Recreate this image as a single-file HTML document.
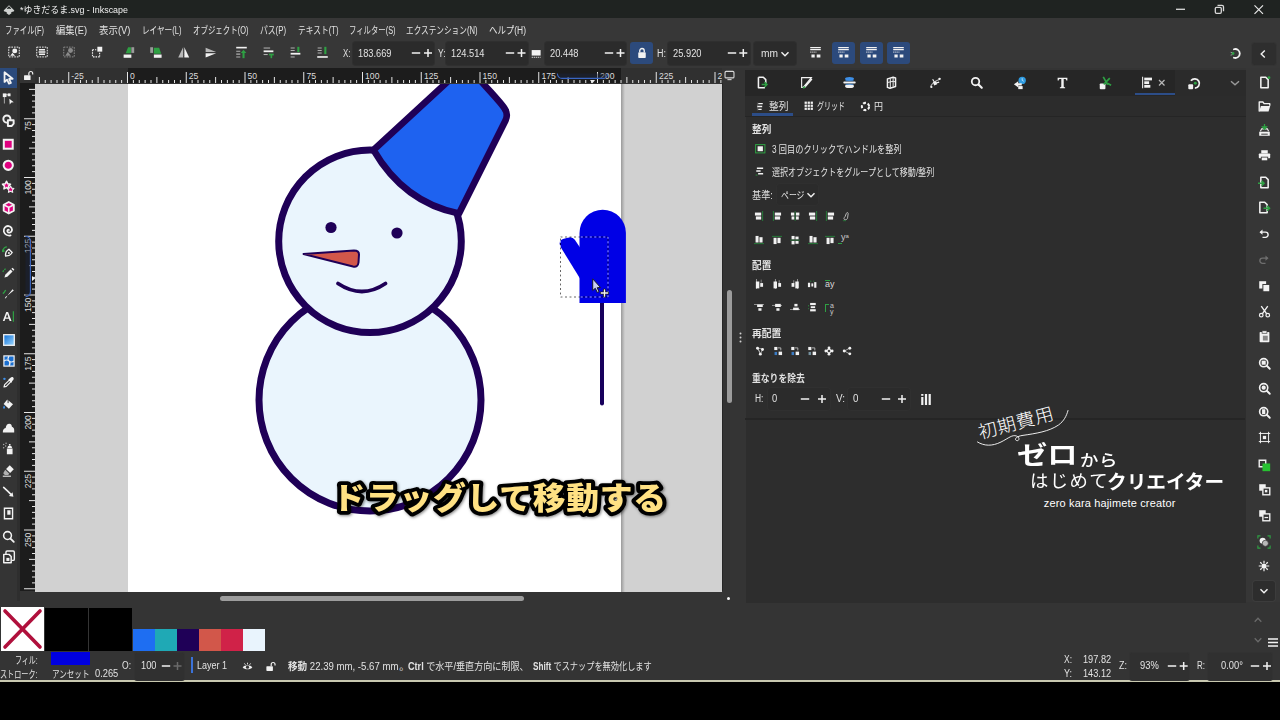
<!DOCTYPE html>
<html lang="ja">
<head>
<meta charset="utf-8">
<title>*ゆきだるま.svg - Inkscape</title>
<style>
html,body{margin:0;padding:0;}
body{width:1280px;height:720px;position:relative;overflow:hidden;background:#000;
 font-family:"Liberation Sans","Noto Sans CJK JP",sans-serif;color:#e2e2e2;font-size:10px;}
.abs{position:absolute;}
.t{position:absolute;white-space:nowrap;line-height:1;transform-origin:0 50%;}
svg{position:absolute;overflow:visible;}
#titlebar{left:0;top:0;width:1280px;height:18px;background:#1f2321;}
#topchrome{left:0;top:18px;width:1280px;height:50px;background:#373737;}
#chrome{left:0;top:18px;width:1280px;height:663px;background:#343434;}
#bottomline{left:0;top:680px;width:1280px;height:2px;background:#c9c9b0;}
#black{left:0;top:682px;width:1280px;height:38px;background:#000;}
#canvas{left:35px;top:83.500px;width:687px;height:508px;background:#d1d1d1;overflow:hidden;}
#page{left:93px;top:0;width:493px;height:508px;background:#fff;}
#pageshadow{left:586px;top:0;width:4px;height:508px;background:linear-gradient(90deg,#9a9a9a,#d1d1d1);}
#hruler{left:35px;top:68px;width:687px;height:15px;background:#303030;overflow:hidden;}
#hrulerpage{left:93px;top:0;width:493px;height:15px;background:#1c1c1c;}
#vruler{left:20px;top:83px;width:15px;height:508px;background:#1c1c1c;overflow:hidden;}
#dock{left:745.500px;top:70px;width:500.500px;height:532.800px;background:#2d2d2d;}
#docktabs{left:745px;top:70px;width:501px;height:26px;background:#262626;}
#subtabs{left:745px;top:96px;width:501px;height:20px;background:#2c2c2c;border-bottom:1px solid #252525;}
.box{position:absolute;background:#2b2b2b;border-radius:3px;box-shadow:0 0 0 1px #2f2f2f;}
.capt{font-family:"Noto Sans CJK JP",sans-serif;font-weight:900;font-size:32px;letter-spacing:0.2px;}
.lg{color:#fff;font-family:"Noto Sans CJK JP","Liberation Sans",sans-serif;}
#lg5{font-family:"Liberation Sans",sans-serif;}
.bbtn{position:absolute;background:#2c4a7c;border-radius:3px;}
</style>
</head>
<body>
<div id="titlebar" class="abs"></div>
<div id="chrome" class="abs"></div>
<div id="topchrome" class="abs"></div>
<div id="hruler" class="abs"><div id="hrulerpage" class="abs"></div></div>
<div id="vruler" class="abs"></div>
<div id="dock" class="abs"></div>
<div id="docktabs" class="abs"></div>
<div id="subtabs" class="abs"></div>
<div id="bottomline" class="abs"></div>
<div id="black" class="abs"></div>

<div id="canvas" class="abs">
<div id="page" class="abs"></div>
<div id="pageshadow" class="abs"></div>
<svg style="left:0;top:0;overflow:hidden" width="687" height="508" viewBox="35 83.500 687 508">
 <!-- body -->
 <circle cx="370" cy="399.5" r="111" fill="#eaf5fd" stroke="#1f0057" stroke-width="7"/>
 <!-- head -->
 <circle cx="370" cy="240.8" r="91.3" fill="#eaf5fd" stroke="#1f0057" stroke-width="7"/>
 <!-- bucket hat -->
 <path d="M373.5 149.500 L468.400 62 L477 76 C488 89 499 100 504.300 107.500 Q508.600 113.500 505.500 120 L459 213 Q404 202 373.500 149.500 Z" fill="#1e62f0" stroke="#1f0057" stroke-width="6.600" stroke-linejoin="round"/>
 <!-- eyes -->
 <circle cx="331" cy="227" r="5.6" fill="#1f0057"/>
 <circle cx="397" cy="232.5" r="5.6" fill="#1f0057"/>
 <!-- nose -->
 <path d="M303.5 253.5 L354 250 Q359 250 359 254 L358.5 262 Q358 267 353 266 Z" fill="#d2574a" stroke="#1f0057" stroke-width="2" stroke-linejoin="round"/>
 <!-- mouth -->
 <path d="M338 283 Q 362 299 385.5 283" fill="none" stroke="#1f0057" stroke-width="3.800" stroke-linecap="round"/>
 <!-- stick -->
 <path d="M602 300 L602 403" stroke="#17005c" stroke-width="4" stroke-linecap="round" fill="none"/>
 <!-- mitten -->
 <path d="M579.5 302.5 L579.5 232.5 A23.2 23.2 0 0 1 625.9 232.5 L625.9 302.5 Z" fill="#0000e6"/>
 <path d="M560.300 246 L580 278 L580 247 L574.800 239.300 Q572.500 236 568.500 237 L563 238.500 Q558.300 240 560.300 246 Z" fill="#0000e6"/>
 <!-- dashed selection -->
 <rect x="560.5" y="236.5" width="47.500" height="60" fill="none" stroke="#000" stroke-opacity=".6" stroke-width="1" stroke-dasharray="2 2.500"/>
 <rect x="560.5" y="236.5" width="47.500" height="60" fill="none" stroke="#fff" stroke-opacity=".6" stroke-width="1" stroke-dasharray="2 2.500" stroke-dashoffset="2.200"/>
 <!-- cursor -->
 <path d="M592.700 278.300 L592.700 290 L595.300 287.800 L597.300 292 L599 291.200 L597.200 287.200 L600.500 287 Z" fill="#c9cdf3" stroke="#1a1a2a" stroke-width="1"/>
 <g stroke="#222" stroke-width="2.800" fill="none" stroke-linecap="round"><path d="M601.300 292.500 h6.400 M604.500 289.300 v6.400"/></g>
 <g stroke="#f4f4f4" stroke-width="1.300" fill="none" stroke-linecap="round"><path d="M601.300 292.500 h6.400 M604.500 289.300 v6.400"/></g>
</svg>
</div>

<svg style="left:35px;top:68px;overflow:hidden" width="687" height="15" viewBox="35 68 687 15">
<path d="M39.38 83v-6 M45.25 83v-3 M51.12 83v-3 M57.00 83v-3 M62.88 83v-3 M68.75 83v-11 M74.62 83v-3 M80.50 83v-3 M86.38 83v-3 M92.25 83v-3 M98.12 83v-6 M104.00 83v-3 M109.88 83v-3 M115.75 83v-3 M121.62 83v-3 M127.50 83v-11 M133.38 83v-3 M139.25 83v-3 M145.12 83v-3 M151.00 83v-3 M156.88 83v-6 M162.75 83v-3 M168.62 83v-3 M174.50 83v-3 M180.38 83v-3 M186.25 83v-11 M192.12 83v-3 M198.00 83v-3 M203.88 83v-3 M209.75 83v-3 M215.62 83v-6 M221.50 83v-3 M227.38 83v-3 M233.25 83v-3 M239.12 83v-3 M245.00 83v-11 M250.88 83v-3 M256.75 83v-3 M262.62 83v-3 M268.50 83v-3 M274.38 83v-6 M280.25 83v-3 M286.12 83v-3 M292.00 83v-3 M297.88 83v-3 M303.75 83v-11 M309.62 83v-3 M315.50 83v-3 M321.38 83v-3 M327.25 83v-3 M333.12 83v-6 M339.00 83v-3 M344.88 83v-3 M350.75 83v-3 M356.62 83v-3 M362.50 83v-11 M368.38 83v-3 M374.25 83v-3 M380.12 83v-3 M386.00 83v-3 M391.88 83v-6 M397.75 83v-3 M403.62 83v-3 M409.50 83v-3 M415.38 83v-3 M421.25 83v-11 M427.12 83v-3 M433.00 83v-3 M438.88 83v-3 M444.75 83v-3 M450.62 83v-6 M456.50 83v-3 M462.38 83v-3 M468.25 83v-3 M474.12 83v-3 M480.00 83v-11 M485.88 83v-3 M491.75 83v-3 M497.62 83v-3 M503.50 83v-3 M509.38 83v-6 M515.25 83v-3 M521.12 83v-3 M527.00 83v-3 M532.88 83v-3 M538.75 83v-11 M544.62 83v-3 M550.50 83v-3 M556.38 83v-3 M562.25 83v-3 M568.12 83v-6 M574.00 83v-3 M579.88 83v-3 M585.75 83v-3 M591.62 83v-3 M597.50 83v-11 M603.38 83v-3 M609.25 83v-3 M615.12 83v-3 M621.00 83v-3 M626.88 83v-6 M632.75 83v-3 M638.62 83v-3 M644.50 83v-3 M650.38 83v-3 M656.25 83v-11 M662.12 83v-3 M668.00 83v-3 M673.88 83v-3 M679.75 83v-3 M685.62 83v-6 M691.50 83v-3 M697.38 83v-3 M703.25 83v-3 M709.12 83v-3 M715.00 83v-11 M720.88 83v-3" stroke="#e6e6e6" stroke-width="1" fill="none"/>
<text x="71.3" y="78.800" font-size="8.600" fill="#dcdcdc" font-family="Liberation Sans, sans-serif">-25</text>
<text x="130.1" y="78.800" font-size="8.600" fill="#dcdcdc" font-family="Liberation Sans, sans-serif">0</text>
<text x="188.8" y="78.800" font-size="8.600" fill="#dcdcdc" font-family="Liberation Sans, sans-serif">25</text>
<text x="247.6" y="78.800" font-size="8.600" fill="#dcdcdc" font-family="Liberation Sans, sans-serif">50</text>
<text x="306.4" y="78.800" font-size="8.600" fill="#dcdcdc" font-family="Liberation Sans, sans-serif">75</text>
<text x="365.1" y="78.800" font-size="8.600" fill="#dcdcdc" font-family="Liberation Sans, sans-serif">100</text>
<text x="423.9" y="78.800" font-size="8.600" fill="#dcdcdc" font-family="Liberation Sans, sans-serif">125</text>
<text x="482.6" y="78.800" font-size="8.600" fill="#dcdcdc" font-family="Liberation Sans, sans-serif">150</text>
<text x="541.4" y="78.800" font-size="8.600" fill="#dcdcdc" font-family="Liberation Sans, sans-serif">175</text>
<text x="600.1" y="78.800" font-size="8.600" fill="#dcdcdc" font-family="Liberation Sans, sans-serif">200</text>
<text x="658.9" y="78.800" font-size="8.600" fill="#dcdcdc" font-family="Liberation Sans, sans-serif">225</text>
<text x="717.6" y="78.800" font-size="8.600" fill="#dcdcdc" font-family="Liberation Sans, sans-serif">250</text>
</svg>
<svg style="left:20px;top:83px;overflow:hidden" width="15" height="508" viewBox="20 83 15 508">
<path d="M35 89.38h-6 M35 95.25h-3 M35 101.12h-3 M35 107.00h-3 M35 112.88h-3 M35 118.75h-11 M35 124.62h-3 M35 130.50h-3 M35 136.38h-3 M35 142.25h-3 M35 148.12h-6 M35 154.00h-3 M35 159.88h-3 M35 165.75h-3 M35 171.62h-3 M35 177.50h-11 M35 183.38h-3 M35 189.25h-3 M35 195.12h-3 M35 201.00h-3 M35 206.88h-6 M35 212.75h-3 M35 218.62h-3 M35 224.50h-3 M35 230.38h-3 M35 236.25h-11 M35 242.12h-3 M35 248.00h-3 M35 253.88h-3 M35 259.75h-3 M35 265.62h-6 M35 271.50h-3 M35 277.38h-3 M35 283.25h-3 M35 289.12h-3 M35 295.00h-11 M35 300.88h-3 M35 306.75h-3 M35 312.62h-3 M35 318.50h-3 M35 324.38h-6 M35 330.25h-3 M35 336.12h-3 M35 342.00h-3 M35 347.88h-3 M35 353.75h-11 M35 359.62h-3 M35 365.50h-3 M35 371.38h-3 M35 377.25h-3 M35 383.12h-6 M35 389.00h-3 M35 394.88h-3 M35 400.75h-3 M35 406.62h-3 M35 412.50h-11 M35 418.38h-3 M35 424.25h-3 M35 430.12h-3 M35 436.00h-3 M35 441.88h-6 M35 447.75h-3 M35 453.62h-3 M35 459.50h-3 M35 465.38h-3 M35 471.25h-11 M35 477.12h-3 M35 483.00h-3 M35 488.88h-3 M35 494.75h-3 M35 500.62h-6 M35 506.50h-3 M35 512.38h-3 M35 518.25h-3 M35 524.12h-3 M35 530.00h-11 M35 535.88h-3 M35 541.75h-3 M35 547.62h-3 M35 553.50h-3 M35 559.38h-6 M35 565.25h-3 M35 571.12h-3 M35 577.00h-3 M35 582.88h-3 M35 588.75h-11" stroke="#e6e6e6" stroke-width="1" fill="none"/>
<text transform="translate(30.800 62.6) rotate(-90)" text-anchor="end" font-size="8.600" fill="#dcdcdc" font-family="Liberation Sans, sans-serif">50</text>
<text transform="translate(30.800 121.3) rotate(-90)" text-anchor="end" font-size="8.600" fill="#dcdcdc" font-family="Liberation Sans, sans-serif">75</text>
<text transform="translate(30.800 180.1) rotate(-90)" text-anchor="end" font-size="8.600" fill="#dcdcdc" font-family="Liberation Sans, sans-serif">100</text>
<text transform="translate(30.800 238.8) rotate(-90)" text-anchor="end" font-size="8.600" fill="#dcdcdc" font-family="Liberation Sans, sans-serif">125</text>
<text transform="translate(30.800 297.6) rotate(-90)" text-anchor="end" font-size="8.600" fill="#dcdcdc" font-family="Liberation Sans, sans-serif">150</text>
<text transform="translate(30.800 356.4) rotate(-90)" text-anchor="end" font-size="8.600" fill="#dcdcdc" font-family="Liberation Sans, sans-serif">175</text>
<text transform="translate(30.800 415.1) rotate(-90)" text-anchor="end" font-size="8.600" fill="#dcdcdc" font-family="Liberation Sans, sans-serif">200</text>
<text transform="translate(30.800 473.9) rotate(-90)" text-anchor="end" font-size="8.600" fill="#dcdcdc" font-family="Liberation Sans, sans-serif">225</text>
<text transform="translate(30.800 532.6) rotate(-90)" text-anchor="end" font-size="8.600" fill="#dcdcdc" font-family="Liberation Sans, sans-serif">250</text>
<text transform="translate(30.800 591.4) rotate(-90)" text-anchor="end" font-size="8.600" fill="#dcdcdc" font-family="Liberation Sans, sans-serif">275</text>
</svg>
<div class="box" style="left:353px;top:42px;width:81px;height:23px;"></div>
<div class="box" style="left:446px;top:42px;width:81.5px;height:23px;"></div>
<div class="box" style="left:545px;top:42px;width:80.5px;height:23px;"></div>
<div class="box" style="left:668px;top:42px;width:81.5px;height:23px;"></div>
<div class="box" style="left:754px;top:42px;width:42px;height:23px;"></div>
<div class="bbtn" style="left:630px;top:42px;width:23px;height:22px"></div>
<div class="bbtn" style="left:832px;top:42px;width:23px;height:22px"></div>
<div class="bbtn" style="left:860px;top:42px;width:22.5px;height:22px"></div>
<div class="bbtn" style="left:887px;top:42px;width:22.5px;height:22px"></div>
<div class="abs" style="left:0;top:68px;width:17px;height:20px;background:#2b4a7b"></div>
<div class="abs" style="left:17px;top:68px;width:3px;height:533px;background:#2e2e2e"></div>
<div class="box" style="left:777px;top:184px;width:41px;height:21px;"></div>
<div class="box" style="left:767.5px;top:388px;width:62.5px;height:22px;background:#2b2b2b;box-shadow:0 0 0 1px #303030;"></div>
<div class="box" style="left:848px;top:388px;width:62px;height:22px;background:#2b2b2b;box-shadow:0 0 0 1px #303030;"></div>
<div class="abs" style="left:751.5px;top:113px;width:41.5px;height:2.5px;background:#2c4d88"></div>
<div class="abs" style="left:1135px;top:92.5px;width:40px;height:2.5px;background:#2c4d88"></div>
<div class="abs" style="left:1246px;top:68px;width:34px;height:534px;background:#363636"></div>
<div class="abs" style="left:1175px;top:70px;width:71px;height:26px;background:#2b2b2b"></div>
<div class="abs" style="left:745px;top:418px;width:500px;height:1.500px;background:#252525"></div>
<div class="box" style="left:1253px;top:581px;width:21.5px;height:19.5px;background:#2d2d2d;box-shadow:0 0 0 1px #3c3c3c;"></div>
<div class="box" style="left:1252px;top:42.5px;width:24px;height:22.0px;background:#2e2e2e;box-shadow:0 0 0 1px #343434;"></div>
<div class="box" style="left:135px;top:653px;width:49px;height:27px;background:#303030;border-radius:2px;box-shadow:0 0 0 1px #323232;"></div>
<div class="box" style="left:1130px;top:653px;width:59px;height:27px;background:#303030;border-radius:2px;box-shadow:0 0 0 1px #323232;"></div>
<div class="box" style="left:1207.5px;top:653px;width:64.5px;height:27px;background:#303030;border-radius:2px;box-shadow:0 0 0 1px #323232;"></div>
<div class="abs" style="left:722px;top:83px;width:1px;height:508px;background:#262626"></div>
<div class="abs" style="left:220px;top:596px;width:303.5px;height:5px;border-radius:3px;background:#9c9c9c"></div>
<div class="abs" style="left:727px;top:290px;width:4.5px;height:113px;border-radius:3px;background:#9c9c9c"></div>
<div class="abs" style="left:727.300px;top:597px;width:3px;height:3px;border-radius:2px;background:#f4f4f4"></div>
<div class="abs" style="left:1px;top:607px;width:43px;height:44px;background:#fff"></div>
<svg style="left:1px;top:607px" width="43" height="44"><path d="M4 4 L39 40 M39 4 L4 40" stroke="#b0103c" stroke-width="3.6" stroke-linecap="round"/></svg>
<div class="abs" style="left:45px;top:607.5px;width:43.2px;height:43.5px;background:#000"></div>
<div class="abs" style="left:89.2px;top:607.5px;width:42.8px;height:43.5px;background:#000"></div>
<div class="abs" style="left:133px;top:629.4px;width:21.6px;height:21.4px;background:#1e6ef2"></div>
<div class="abs" style="left:155px;top:629.4px;width:21.6px;height:21.4px;background:#1fa9b5"></div>
<div class="abs" style="left:177px;top:629.4px;width:21.6px;height:21.4px;background:#1f0057"></div>
<div class="abs" style="left:199px;top:629.4px;width:21.6px;height:21.4px;background:#d2574a"></div>
<div class="abs" style="left:221px;top:629.4px;width:21.6px;height:21.4px;background:#d02248"></div>
<div class="abs" style="left:243px;top:629.4px;width:21.6px;height:21.4px;background:#e9f4fd"></div>
<div class="abs" style="left:50.6px;top:651.6px;width:39.4px;height:13.5px;background:#0000e0"></div>
<div class="abs" style="left:190.6px;top:657px;width:2.4px;height:16px;background:#3b72d9"></div>
<svg style="left:1.8px;top:71.2px;" width="13.5" height="13.5" viewBox="0 0 16 16"><path d="M3 1.5 L3 13 L6 10.3 L8.2 15 L10.6 14 L8.4 9.4 L12.6 9.2 Z" fill="#2b4a7b" stroke="#f2f2f2" stroke-width="2.100" stroke-linejoin="round"/></svg>
<svg style="left:2.0px;top:92.5px;" width="13" height="13" viewBox="0 0 16 16"><path d="M3 2v11M3 2h6" stroke="#9a9a9a" stroke-width="1.4" fill="none"/><rect x="1" y="0.5" width="4.5" height="4.5" fill="#f2f2f2"/><rect x="7" y="0.5" width="3.5" height="3.5" fill="#f2f2f2"/><path d="M9 7l5.5 4.5-3 .3-2 2.4z" fill="#f2f2f2"/></svg>
<svg style="left:1.8px;top:113.8px;" width="13.5" height="13.5" viewBox="0 0 16 16"><circle cx="5.800" cy="6" r="4.200" fill="none" stroke="#f2f2f2" stroke-width="2.300"/><path d="M7 7.500h6.800v4l-2.500 2.800h-4.300z" fill="#343434" stroke="#f2f2f2" stroke-width="2.300" stroke-linejoin="round"/></svg>
<svg style="left:2.2px;top:137.8px;" width="12.5" height="12.5" viewBox="0 0 16 16"><rect x="2.300" y="2.300" width="11.400" height="11.400" fill="#e0007f" stroke="#f2f2f2" stroke-width="2.600"/></svg>
<svg style="left:2.2px;top:158.8px;" width="12.5" height="12.5" viewBox="0 0 16 16"><circle cx="8" cy="8" r="5.900" fill="#e0007f" stroke="#f2f2f2" stroke-width="2.600"/></svg>
<svg style="left:2.0px;top:180.0px;" width="13" height="13" viewBox="0 0 16 16"><path d="M5.5 1.5l1.6 3.2 3.4.4-2.5 2.4.7 3.5-3.2-1.7-3.1 1.7.6-3.5L.6 5.1l3.4-.4z" fill="#e0007f" stroke="#f2f2f2" stroke-width="1.900" stroke-linejoin="round"/><path d="M10.5 7.5l1.4 2.5 2.8.4-2 2 .5 2.8-2.7-1.4-2.6 1.4.5-2.8-2-2 2.8-.4z" fill="#e0007f" stroke="#f2f2f2" stroke-width="1.3" stroke-linejoin="round"/></svg>
<svg style="left:1.8px;top:200.9px;" width="13.5" height="13.5" viewBox="0 0 16 16"><path d="M8 1.2l6 3.2v7.2l-6 3.2-6-3.2V4.4z" fill="#e0007f" stroke="#f2f2f2" stroke-width="2.200" stroke-linejoin="round"/><path d="M2 4.400l6 3.200 6-3.200M8 7.600v7" stroke="#f2f2f2" stroke-width="1.900" fill="none"/></svg>
<svg style="left:1.8px;top:222.9px;" width="13.5" height="13.5" viewBox="0 0 16 16"><path d="M8.300 8.200c-1.300-.700-2.500.700-1.800 2 .9 1.800 3.700 1.500 4.800-.400 1.500-2.600-.400-5.800-3.400-6.200-3.700-.500-6.500 3-5.700 6.500.9 3.500 4.500 5.300 8 4.500" fill="none" stroke="#f2f2f2" stroke-width="2.100" stroke-linecap="round"/></svg>
<svg style="left:2.0px;top:246.0px;" width="13" height="13" viewBox="0 0 16 16"><path d="M4.500 12.500c-.5-3 .5-6.500 4-8.500l4 4c-2 3.500-5 4.500-8 4.500z" fill="none" stroke="#f2f2f2" stroke-width="1.7" stroke-linejoin="round"/><circle cx="8.5" cy="8.500" r="1.2" fill="#f2f2f2"/><path d="M1 5.500c1-3 3-4.500 5-4.500" stroke="#2ea043" stroke-width="1.5" fill="none"/><rect x="0" y="4.5" width="3" height="3" fill="#2ea043"/></svg>
<svg style="left:2.0px;top:267.2px;" width="13" height="13" viewBox="0 0 16 16"><path d="M3 13l1-3.500 6.500-6.500 2.500 2.500-6.500 6.500z" fill="#f2f2f2"/><path d="M11.500 2l1.500-1.200 2.200 2.200-1.200 1.500z" fill="#f2f2f2"/><path d="M1 6c1-2 2.500-3.500 4.500-4.500" stroke="#2ea043" stroke-width="1.600" fill="none" stroke-dasharray="2 1.2"/></svg>
<svg style="left:2.0px;top:288.0px;" width="13" height="13" viewBox="0 0 16 16"><path d="M3.500 13c.5-2 1.500-3 3-3.500l6.500-8 1.500 1.500-8 6.500c-.5 1.500-1.500 3-3 3.500z" fill="#f2f2f2"/><path d="M1 7c1.500-1 2.500-2.500 3.500-4.500" stroke="#2ea043" stroke-width="1.700" fill="none"/></svg>
<svg style="left:2.0px;top:310.2px;" width="13" height="13" viewBox="0 0 16 16"><path d="M1 13.500L5.200 2.500h2.300l4.200 11h-2.300l-.9-2.600H4.100l-.9 2.600zm3.700-4.400h3.200L6.300 4.600z" fill="#f2f2f2"/><path d="M14 1.500v13" stroke="#2ea043" stroke-width="1.500"/></svg>
<svg style="left:2.5px;top:333.5px" width="12" height="12" viewBox="0 0 12 12"><defs><linearGradient id="gr1" x1="0" y1="0" x2="1" y2="1"><stop offset="0" stop-color="#0d6fd8"/><stop offset="1" stop-color="#9ed8ff"/></linearGradient></defs><rect x=".7" y=".7" width="10.600" height="10.600" fill="url(#gr1)" stroke="#f2f2f2" stroke-width="1.300"/></svg>
<svg style="left:2.5px;top:355.0px;" width="12" height="12" viewBox="0 0 16 16"><rect x="1.200" y="1.200" width="13.600" height="13.600" fill="#1a6fd0" stroke="#f2f2f2" stroke-width="1.600"/><path d="M1.500 8c2.500-2 4-2 6.500 0s4 2 6.500 0M8 1.500c-2 2.500-2 4 0 6.500s2 4 0 6.500" stroke="#f2f2f2" stroke-width="1.500" fill="none"/></svg>
<svg style="left:2.0px;top:376.0px;" width="13" height="13" viewBox="0 0 16 16"><path d="M2.500 13.500l.8-2.800 5.700-5.700 2 2-5.700 5.700z" fill="none" stroke="#f2f2f2" stroke-width="1.500" stroke-linejoin="round"/><path d="M9 3.500l1.500-1.500c1-1 2.500-1 3.300-.2s.8 2.300-.2 3.300l-1.500 1.500 .5 .5-1.200 1.200-3.600-3.600 1.200-1.200z" fill="#f2f2f2"/><circle cx="3" cy="3.500" r="1.500" fill="#3d8fe8"/></svg>
<svg style="left:2.0px;top:397.2px;" width="13" height="13" viewBox="0 0 16 16"><path d="M6.500 3l7 6-5 5.500-6.500-6z" fill="#f2f2f2"/><path d="M7.500 1.500v6" stroke="#343434" stroke-width="1.200"/><path d="M2.500 10.500c-1.200 1.800-1.500 2.800-.7 3.600.8.700 2 .2 2-1.100 0-.8-.6-1.600-1.300-2.500z" fill="#3d8fe8"/></svg>
<svg style="left:2.0px;top:420.5px;" width="13" height="13" viewBox="0 0 16 16"><path d="M1 14c0-3 1-5 3.500-5.500.5-3 2-5 4.500-5 2 0 3 1.500 3.200 3.500 1.800.5 2.800 2 2.800 4v3z" fill="#f2f2f2"/></svg>
<svg style="left:2.0px;top:442.2px;" width="13" height="13" viewBox="0 0 16 16"><path d="M6 8h7v7H6zM7.500 5h4l1 2.500h-6z" fill="#f2f2f2"/><path d="M8.500 2.500h2v2h-2z" fill="#f2f2f2"/><g fill="#aaa"><circle cx="2" cy="3" r=".9"/><circle cx="4.500" cy="5" r=".9"/><circle cx="2" cy="7" r=".9"/><circle cx="5" cy="1.500" r=".9"/></g></svg>
<svg style="left:2.0px;top:463.5px;" width="13" height="13" viewBox="0 0 16 16"><path d="M9.500 1.500l5 5-4.500 4.500-5-5z" fill="#f2f2f2"/><path d="M4 7l5 5-1.500 1.500h-4L1.500 11.500z" fill="#b0b0b0"/><path d="M1 15h10" stroke="#f2f2f2" stroke-width="1.300"/></svg>
<svg style="left:2.0px;top:484.5px;" width="13" height="13" viewBox="0 0 16 16"><path d="M2 3l5 4.500v0l4 4" stroke="#f2f2f2" stroke-width="2" fill="none" stroke-linecap="round"/><path d="M8.500 13.500l5.500 1-1-5.500z" fill="#f2f2f2"/></svg>
<svg style="left:2.0px;top:507.2px;" width="13" height="13" viewBox="0 0 16 16"><path d="M3 1.500h10v13H3z" fill="none" stroke="#f2f2f2" stroke-width="1.700"/><path d="M6.500 4h4v5.500h-4z" fill="#f2f2f2"/></svg>
<svg style="left:2.0px;top:529.5px;" width="13" height="13" viewBox="0 0 16 16"><circle cx="6.800" cy="6.800" r="4.800" fill="none" stroke="#f2f2f2" stroke-width="1.900"/><path d="M10.500 10.500l4 4" stroke="#f2f2f2" stroke-width="2.200" stroke-linecap="round"/></svg>
<svg style="left:1.5px;top:550.0px;" width="14" height="14" viewBox="0 0 16 16"><path d="M4.500 4.500V2.500c0-.8.500-1.300 1.300-1.300h7c.8 0 1.300.5 1.300 1.300v8c0 .8-.5 1.300-1.300 1.300h-1.500" fill="none" stroke="#f2f2f2" stroke-width="1.600"/><path d="M2 5h6l2.500 2.500V14.500H2z" fill="none" stroke="#f2f2f2" stroke-width="1.700" stroke-linejoin="round"/><path d="M5 9h3.500v3.500H5z" fill="#f2f2f2"/></svg>
<svg style="left:1174px;top:3px" width="100" height="14" viewBox="1174 3 100 14"><path d="M1176 9.300h9" stroke="#d0d0d0" stroke-width="1.400"/><rect x="1215.300" y="7.300" width="6" height="6" rx="1.200" fill="none" stroke="#d8d8d8" stroke-width="1.300"/><path d="M1217.500 5.300h4.500q1.500 0 1.500 1.500v4.500" fill="none" stroke="#d8d8d8" stroke-width="1.300"/><path d="M1254.500 5.300l8.500 8.500m0-8.500l-8.500 8.500" stroke="#e8e8e8" stroke-width="1.200"/></svg>
<svg style="left:2.5px;top:3.5px;" width="12" height="12" viewBox="0 0 16 16"><path d="M8 1.500L1.500 8c-.8.800-.5 1.700.5 2l2.500.700c1 .300.800 1-.100 1.300l3.600 2.500 3.600-2.500c-.900-.300-1.100-1-.100-1.300l2.500-.700c1-.300 1.300-1.200.500-2z" fill="#cfd2d0"/><path d="M8 3l3 3-1.500.8L8 6l-1.500.8L5 6z" fill="#1d2320"/></svg>
<svg style="left:8.3px;top:46.3px;" width="12" height="12" viewBox="0 0 16 16"><rect x="1" y="1.500" width="14" height="13" fill="none" stroke="#f2f2f2" stroke-width="1.300" stroke-dasharray="2.200 1.300"/><circle cx="9" cy="6.500" r="3.300" fill="#f2f2f2"/><path d="M3 13l3-4 3.500 4z" fill="#f2f2f2"/></svg>
<svg style="left:35.5px;top:46.3px;" width="12" height="12" viewBox="0 0 16 16"><rect x="1" y="1.500" width="14" height="13" fill="none" stroke="#f2f2f2" stroke-width="1.300" stroke-dasharray="2.200 1.300"/><path d="M4 5h8M3.500 8h9M4 11h8" stroke="#f2f2f2" stroke-width="2"/></svg>
<svg style="left:63.0px;top:46.3px;" width="12" height="12" viewBox="0 0 16 16"><rect x="1" y="1.500" width="14" height="13" fill="none" stroke="#8a8a8a" stroke-width="1.300" stroke-dasharray="2.200 1.300"/><circle cx="10" cy="6" r="3.300" fill="#8a8a8a"/><path d="M3 13l3.500-5.500 4 5.500z" fill="#8a8a8a"/></svg>
<svg style="left:91.0px;top:46.3px;" width="12" height="12" viewBox="0 0 16 16"><path d="M2 5v9.500h9.500" fill="none" stroke="#f2f2f2" stroke-width="1.500" stroke-dasharray="2 1.400"/><path d="M2 5h5M11.500 9v5" stroke="#f2f2f2" stroke-width="1.500" stroke-dasharray="2 1.400"/><rect x="8.500" y="1" width="6.500" height="6.500" fill="#f2f2f2"/></svg>
<svg style="left:121.5px;top:45.8px;" width="13" height="13" viewBox="0 0 16 16"><path d="M4.500 9l3-7.500h3.500v7.500z" fill="#2ea043"/><rect x="11.500" y="1.500" width="3.500" height="7" fill="#9a9a9a"/><rect x="2" y="10.500" width="9.500" height="4" fill="#f2f2f2"/></svg>
<svg style="left:149.2px;top:45.8px;" width="13" height="13" viewBox="0 0 16 16"><path d="M6 2h6.500l2.500 7.500h-9z" fill="#2ea043"/><rect x="1.500" y="1.500" width="3.500" height="7" fill="#9a9a9a"/><rect x="6" y="10.500" width="9.500" height="4" fill="#f2f2f2"/></svg>
<svg style="left:176.8px;top:45.8px;" width="13" height="13" viewBox="0 0 16 16"><path d="M7.500 1.500L1.500 14h6z" fill="#b8b8b8"/><path d="M9 1.500L15 14H9z" fill="#f2f2f2"/><path d="M8.200 1v14" stroke="#555" stroke-width=".8" stroke-dasharray="1.500 1"/></svg>
<svg style="left:203.8px;top:45.8px;" width="13" height="13" viewBox="0 0 16 16"><path d="M2 2l13 5.500H2z" fill="#b8b8b8"/><path d="M2 14l13-5H2z" fill="#f2f2f2"/></svg>
<svg style="left:234.5px;top:45.8px;" width="13" height="13" viewBox="0 0 16 16"><path d="M1.500 2h13" stroke="#f2f2f2" stroke-width="2"/><path d="M1.500 6.500h5M1.500 10h5M1.500 13.500h5" stroke="#b0b0b0" stroke-width="1.300"/><path d="M10.500 15V8" stroke="#2ea043" stroke-width="2.600"/><path d="M7 8.500l3.500-4 3.500 4z" fill="#2ea043"/></svg>
<svg style="left:261.5px;top:45.8px;" width="13" height="13" viewBox="0 0 16 16"><path d="M2 2.500h8" stroke="#b0b0b0" stroke-width="1.300"/><path d="M2 6.500h12" stroke="#f2f2f2" stroke-width="2.200"/><path d="M2 10.500h5" stroke="#b0b0b0" stroke-width="1.300"/><path d="M8.500 10.500h6" stroke="#2ea043" stroke-width="2.200"/><path d="M11.500 15v-4" stroke="#2ea043" stroke-width="2"/></svg>
<svg style="left:289.0px;top:45.8px;" width="13" height="13" viewBox="0 0 16 16"><path d="M2 2.500h5M2 5.500h5" stroke="#b0b0b0" stroke-width="1.300"/><path d="M11.500 1v6.500" stroke="#2ea043" stroke-width="2.600"/><path d="M2 9.500h12" stroke="#f2f2f2" stroke-width="2.200"/><path d="M2 13.500h5" stroke="#b0b0b0" stroke-width="1.300"/></svg>
<svg style="left:316.2px;top:45.8px;" width="13" height="13" viewBox="0 0 16 16"><path d="M2 2.500h5M2 5.500h5M2 8.500h5" stroke="#b0b0b0" stroke-width="1.300"/><path d="M11.500 1v9" stroke="#2ea043" stroke-width="2.600"/><path d="M1.500 13.500h13" stroke="#f2f2f2" stroke-width="2"/></svg>
<svg style="left:530.5px;top:47.5px;" width="11" height="11" viewBox="0 0 16 16"><rect x="1" y="3" width="13" height="8" fill="#f2f2f2"/><path d="M1 13.500h13" stroke="#f2f2f2" stroke-width="1.200" stroke-dasharray="2 1"/></svg>
<svg style="left:410.2px;top:46.7px" width="24.0" height="12" viewBox="410.2 46.7 24.0 12"><path d="M412.0 52.7h8.400" stroke="#f2f2f2" stroke-width="1.500"/><path d="M424.2 52.7h8M428.2 48.7v8" stroke="#f2f2f2" stroke-width="1.500"/></svg>
<svg style="left:504px;top:46.7px" width="23.5" height="12" viewBox="504 46.7 23.5 12"><path d="M505.8 52.7h8.400" stroke="#f2f2f2" stroke-width="1.500"/><path d="M517.5 52.7h8M521.5 48.7v8" stroke="#f2f2f2" stroke-width="1.500"/></svg>
<svg style="left:602.8px;top:46.7px" width="23.5" height="12" viewBox="602.8 46.7 23.5 12"><path d="M604.5999999999999 52.7h8.400" stroke="#f2f2f2" stroke-width="1.500"/><path d="M616.3 52.7h8M620.3 48.7v8" stroke="#f2f2f2" stroke-width="1.500"/></svg>
<svg style="left:726px;top:46.7px" width="23.299999999999955" height="12" viewBox="726 46.7 23.299999999999955 12"><path d="M727.8 52.7h8.400" stroke="#f2f2f2" stroke-width="1.500"/><path d="M739.3 52.7h8M743.3 48.7v8" stroke="#f2f2f2" stroke-width="1.500"/></svg>
<svg style="left:799px;top:393px" width="29" height="12" viewBox="799 393 29 12"><path d="M800.8 399h8.400" stroke="#f2f2f2" stroke-width="1.500"/><path d="M818 399h8M822 395v8" stroke="#f2f2f2" stroke-width="1.500"/></svg>
<svg style="left:880px;top:393px" width="28" height="12" viewBox="880 393 28 12"><path d="M881.8 399h8.400" stroke="#f2f2f2" stroke-width="1.500"/><path d="M898 399h8M902 395v8" stroke="#f2f2f2" stroke-width="1.500"/></svg>
<svg style="left:160px;top:660px" width="23.5" height="12" viewBox="160 660 23.5 12"><path d="M161.8 666h8.400" stroke="#f2f2f2" stroke-width="1.500"/><path d="M173.5 666h8M177.5 662v8" stroke="#6a6a6a" stroke-width="1.500"/></svg>
<svg style="left:1166px;top:660px" width="23.700000000000045" height="12" viewBox="1166 660 23.700000000000045 12"><path d="M1167.8 666h8.400" stroke="#f2f2f2" stroke-width="1.500"/><path d="M1179.7 666h8M1183.7 662v8" stroke="#f2f2f2" stroke-width="1.500"/></svg>
<svg style="left:1249px;top:660px" width="24" height="12" viewBox="1249 660 24 12"><path d="M1250.8 666h8.400" stroke="#f2f2f2" stroke-width="1.500"/><path d="M1263 666h8M1267 662v8" stroke="#f2f2f2" stroke-width="1.500"/></svg>
<svg style="left:635.5px;top:47.0px;" width="12" height="12" viewBox="0 0 16 16"><rect x="3" y="7" width="10" height="7.500" rx="1" fill="#f2f2f2"/><path d="M5 7V5a3 3 0 0 1 6 0v2" fill="none" stroke="#f2f2f2" stroke-width="1.800"/></svg>
<svg style="left:779px;top:49px" width="12" height="10" viewBox="-6 -5 12 10"><path d="M-3.5 -1.800L0 1.800L3.5 -1.800" fill="none" stroke="#f2f2f2" stroke-width="1.4"/></svg>
<svg style="left:804.5px;top:189.7px" width="12" height="10" viewBox="-6 -5 12 10"><path d="M-3.5 -1.800L0 1.800L3.5 -1.800" fill="none" stroke="#f2f2f2" stroke-width="1.4"/></svg>
<svg style="left:1229px;top:77.5px" width="12" height="10" viewBox="-6 -5 12 10"><path d="M-4 -1.800L0 1.800L4 -1.800" fill="none" stroke="#9a9a9a" stroke-width="1.4"/></svg>
<svg style="left:1257.5px;top:586px" width="12" height="10" viewBox="-6 -5 12 10"><path d="M-3.5 -1.800L0 1.800L3.5 -1.800" fill="none" stroke="#f2f2f2" stroke-width="1.4"/></svg>
<svg style="left:1258px;top:48px" width="10" height="12" viewBox="-5 -6 10 12"><path d="M1.800 -3.500L-1.800 0L1.800 3.500" fill="none" stroke="#f2f2f2" stroke-width="1.400"/></svg>
<svg style="left:1228.5px;top:46.5px;" width="13" height="13" viewBox="0 0 16 16"><path d="M6 2.800a5.500 5.500 0 1 1 0 10.400" fill="none" stroke="#f2f2f2" stroke-width="2.200" stroke-linecap="round"/><circle cx="5" cy="8" r="1.700" fill="#2ea043"/><path d="M2 6.500l2 .5M2 10l2-.5" stroke="#aaa" stroke-width="1"/></svg>
<svg style="left:809.0px;top:46.0px;" width="13" height="13" viewBox="0 0 16 16"><path d="M1.500 2h13M1.500 4.500h13" stroke="#f2f2f2" stroke-width="1.400"/><path d="M1.500 7.500h8" stroke="#f2f2f2" stroke-width="1.200" stroke-dasharray="1.500 1"/><path d="M3 10.500h4v3.500H3zM9.500 10.500h4.500v3.500h-4.500z" fill="#f2f2f2"/></svg>
<svg style="left:837.0px;top:46.0px;" width="13" height="13" viewBox="0 0 16 16"><path d="M1.500 2h13M1.500 4.500h13" stroke="#f2f2f2" stroke-width="1.400"/><path d="M1.500 7.500h8" stroke="#f2f2f2" stroke-width="1.200" stroke-dasharray="1.500 1"/><path d="M3 10.500h4v3.500H3zM9.500 10.500h4.500v3.500h-4.500z" fill="#f2f2f2"/></svg>
<svg style="left:864.7px;top:46.0px;" width="13" height="13" viewBox="0 0 16 16"><path d="M1.500 2h13M1.500 4.500h13" stroke="#f2f2f2" stroke-width="1.400"/><path d="M1.500 7.500h8" stroke="#f2f2f2" stroke-width="1.200" stroke-dasharray="1.500 1"/><path d="M3 10.500h4v3.500H3zM9.500 10.500h4.500v3.500h-4.500z" fill="#f2f2f2"/></svg>
<svg style="left:891.7px;top:46.0px;" width="13" height="13" viewBox="0 0 16 16"><path d="M1.500 2h13M1.500 4.500h13" stroke="#f2f2f2" stroke-width="1.400"/><path d="M1.500 7.500h8" stroke="#f2f2f2" stroke-width="1.200" stroke-dasharray="1.500 1"/><path d="M3 10.500h4v3.500H3zM9.500 10.500h4.500v3.500h-4.500z" fill="#f2f2f2"/></svg>
<svg style="left:756.0px;top:76.0px;" width="13" height="13" viewBox="0 0 16 16"><path d="M3 1.500h6l3 3v4M3 1.500v13h8" fill="none" stroke="#f2f2f2" stroke-width="1.900" stroke-linejoin="round"/><path d="M7 10.500h5.500M10.500 7.500l3 3-3 3" stroke="#2ea043" stroke-width="1.800" fill="none"/></svg>
<svg style="left:799.5px;top:76.0px;" width="13" height="13" viewBox="0 0 16 16"><path d="M2 2h12L4 14H2z" fill="none" stroke="#f2f2f2" stroke-width="1.400"/><path d="M14.500 3.500L5 14.500" stroke="#f2f2f2" stroke-width="2.200"/><path d="M6.500 13l-3 2" stroke="#2ea043" stroke-width="1.800"/></svg>
<svg style="left:842.5px;top:76.0px;" width="13" height="13" viewBox="0 0 16 16"><ellipse cx="8" cy="3.500" rx="5.500" ry="2.300" fill="#3d8fe8"/><path d="M1.500 8h13" stroke="#f2f2f2" stroke-width="2.300" stroke-linecap="round"/><ellipse cx="8" cy="12.500" rx="5.500" ry="2.300" fill="#f2f2f2"/><path d="M3 5.800h10M3 10.200h10" stroke="#3d8fe8" stroke-width="1"/></svg>
<svg style="left:885.0px;top:76.0px;" width="13" height="13" viewBox="0 0 16 16"><path d="M3 3.500l7-2 3 1v10.500l-7 2-3-1z" fill="none" stroke="#f2f2f2" stroke-width="1.800" stroke-linejoin="round"/><path d="M6.500 3v11.500M10 2v11M3 8l7-1.500 3 .8" stroke="#f2f2f2" stroke-width="1.200" fill="none"/></svg>
<svg style="left:928.5px;top:76.0px;" width="13" height="13" viewBox="0 0 16 16"><path d="M2 14c1-5 5-8 11.500-10" stroke="#b0b0b0" stroke-width="1.300" fill="none"/><path d="M4.500 4l3 5 5-1.500" stroke="#f2f2f2" stroke-width="1.400" fill="none"/><rect x="5.500" y="7" width="4" height="4" fill="#f2f2f2" transform="rotate(-20 7.500 9)"/><circle cx="13" cy="3.500" r="1.500" fill="#f2f2f2"/><circle cx="3" cy="13.500" r="1.300" fill="#f2f2f2"/></svg>
<svg style="left:970.0px;top:76.0px;" width="13" height="13" viewBox="0 0 16 16"><circle cx="6.800" cy="6.800" r="4.600" fill="none" stroke="#f2f2f2" stroke-width="2.200"/><path d="M10.500 10.500l4 4" stroke="#f2f2f2" stroke-width="2.600" stroke-linecap="round"/></svg>
<svg style="left:1013.0px;top:75.5px;" width="14" height="14" viewBox="0 0 16 16"><circle cx="10.500" cy="5" r="4.200" fill="#2f9be0"/><path d="M10.500 2.500V5l1.800 1" stroke="#bfe4ff" stroke-width="1" fill="none"/><path d="M1 9.500l5-3.500v2.200h4v2.600H6V13z" fill="#f2f2f2"/><rect x="6" y="11.500" width="5" height="3.500" fill="#f2f2f2"/></svg>
<svg style="left:1056.0px;top:76.0px;" width="13" height="13" viewBox="0 0 16 16"><path d="M2 2h12v3.500h-1.300c-.2-1.300-.8-1.800-2-1.800H9.500v9c0 .8.500 1.100 1.700 1.200V15H4.800v-1.100c1.200-.1 1.700-.4 1.700-1.200v-9H5.300c-1.200 0-1.800.5-2 1.800H2z" fill="#f2f2f2"/></svg>
<svg style="left:1097.5px;top:75.5px;" width="14" height="14" viewBox="0 0 16 16"><rect x="2" y="8.500" width="6.500" height="6.500" rx="1" fill="#f2f2f2"/><path d="M6 1l5 9M13.500 2.500l-7 7M9 7.500l6 3" stroke="#2ea043" stroke-width="1.900" fill="none"/></svg>
<svg style="left:1141.0px;top:76.0px;" width="13" height="13" viewBox="0 0 16 16"><path d="M2 1v14" stroke="#f2f2f2" stroke-width="1.300"/><rect x="4" y="2" width="9.500" height="3.400" fill="#f2f2f2"/><rect x="4" y="6.500" width="6" height="3.400" fill="#f2f2f2"/><rect x="4" y="11" width="7.500" height="3.400" fill="#f2f2f2"/></svg>
<svg style="left:1157.5px;top:79px" width="8" height="8" viewBox="0 0 8 8"><path d="M1 1l5.500 5.500M6.500 1L1 6.500" stroke="#b8b8b8" stroke-width="1.200"/></svg>
<svg style="left:1187.0px;top:75.5px;" width="14" height="14" viewBox="0 0 16 16"><path d="M4.500 5.500A5.300 5.300 0 1 1 9 13.800" fill="none" stroke="#f2f2f2" stroke-width="2"/><rect x="1.500" y="9.500" width="5.500" height="5.500" rx="1" fill="#f2f2f2"/><circle cx="9.500" cy="8.200" r="1.700" fill="#2ea043"/></svg>
<svg style="left:755.5px;top:101.5px;" width="9" height="9" viewBox="0 0 16 16"><path d="M4 3h8M2 8h9M4 13h6" stroke="#f2f2f2" stroke-width="2.400"/><path d="M2.500 1v14" stroke="#888" stroke-width="0.800"/></svg>
<svg style="left:804.2px;top:101.2px;" width="9.5" height="9.5" viewBox="0 0 16 16"><g fill="#f2f2f2"><rect x="1" y="1" width="3.800" height="3.800"/><rect x="6.100" y="1" width="3.800" height="3.800"/><rect x="11.200" y="1" width="3.800" height="3.800"/><rect x="1" y="6.100" width="3.800" height="3.800"/><rect x="6.100" y="6.100" width="3.800" height="3.800"/><rect x="11.200" y="6.100" width="3.800" height="3.800"/><rect x="1" y="11.200" width="3.800" height="3.800"/><rect x="6.100" y="11.200" width="3.800" height="3.800"/><rect x="11.200" y="11.200" width="3.800" height="3.800"/></g></svg>
<svg style="left:859.5px;top:100.5px;" width="11" height="11" viewBox="0 0 16 16"><circle cx="8" cy="8" r="5.300" fill="none" stroke="#f2f2f2" stroke-width="3" stroke-dasharray="4.300 2.600"/></svg>
<svg style="left:755px;top:143.500px" width="10.500" height="9.500" viewBox="0 0 10.500 9.500"><rect x=".6" y=".6" width="9.300" height="8.300" fill="none" stroke="#2ea043" stroke-width="1"/><rect x="2.600" y="2.300" width="5.300" height="4.900" fill="#f2f2f2"/></svg>
<svg style="left:755.0px;top:166.4px;" width="10" height="10" viewBox="0 0 16 16"><path d="M3 3.500h10M2 8h7M5 12.500h8" stroke="#f2f2f2" stroke-width="2.300"/><path d="M1 14.500h3" stroke="#2ea043" stroke-width="1.300"/></svg>
<svg style="left:754.0px;top:211.0px;" width="10" height="10" viewBox="0 0 16 16"><rect x="1.500" y="2.500" width="10" height="4.800" fill="#f2f2f2"/><rect x="3" y="8.700" width="8.500" height="5" fill="#f2f2f2"/><path d="M13.800 0v16" stroke="#25813a" stroke-width="1.500"/></svg>
<svg style="left:772.0px;top:211.0px;" width="10" height="10" viewBox="0 0 16 16"><rect x="4.500" y="2.500" width="10" height="4.800" fill="#f2f2f2"/><rect x="4.500" y="8.700" width="8.500" height="5" fill="#f2f2f2"/><path d="M2.200 0v16" stroke="#25813a" stroke-width="1.500"/></svg>
<svg style="left:789.7px;top:211.0px;" width="10" height="10" viewBox="0 0 16 16"><rect x="1.500" y="2.500" width="5.500" height="4.800" fill="#f2f2f2"/><rect x="9.500" y="2.500" width="5.500" height="4.800" fill="#f2f2f2"/><rect x="2.500" y="8.700" width="4.500" height="5" fill="#f2f2f2"/><rect x="9.500" y="8.700" width="4.500" height="5" fill="#f2f2f2"/><path d="M8.200 0v16" stroke="#25813a" stroke-width="1.200"/></svg>
<svg style="left:808.0px;top:211.0px;" width="10" height="10" viewBox="0 0 16 16"><rect x="1.500" y="2.500" width="10" height="4.800" fill="#f2f2f2"/><rect x="3" y="8.700" width="8.500" height="5" fill="#f2f2f2"/><path d="M13.800 0v16" stroke="#25813a" stroke-width="1.500"/></svg>
<svg style="left:825.0px;top:211.0px;" width="10" height="10" viewBox="0 0 16 16"><rect x="4.500" y="2.500" width="10" height="4.800" fill="#f2f2f2"/><rect x="4.500" y="8.700" width="8.500" height="5" fill="#f2f2f2"/><path d="M2.200 0v16" stroke="#25813a" stroke-width="1.500"/></svg>
<svg style="left:840.7px;top:211.0px;" width="10" height="10" viewBox="0 0 16 16"><path d="M6 14c-2-1-1.500-3 .5-5l2-5c.5-2 3-2 3 0l-1 7c-.3 2-2 3.500-4.500 3z" fill="none" stroke="#b8b8b8" stroke-width="1.600"/><path d="M3 15.500h5" stroke="#25813a" stroke-width="1.300"/></svg>
<svg style="left:754.0px;top:234.5px;" width="10" height="10" viewBox="0 0 16 16"><rect x="2.500" y="1.500" width="4.800" height="10.500" fill="#f2f2f2"/><rect x="8.700" y="3.500" width="5" height="8.500" fill="#f2f2f2"/><path d="M0 13.800h16" stroke="#25813a" stroke-width="1.500"/></svg>
<svg style="left:772.0px;top:234.5px;" width="10" height="10" viewBox="0 0 16 16"><rect x="2.500" y="4.500" width="4.800" height="10" fill="#f2f2f2"/><rect x="8.700" y="4.500" width="5" height="8.500" fill="#f2f2f2"/><path d="M0 2.200h16" stroke="#25813a" stroke-width="1.500"/></svg>
<svg style="left:789.7px;top:234.5px;" width="10" height="10" viewBox="0 0 16 16"><rect x="2.500" y="1.500" width="4.800" height="5.500" fill="#f2f2f2"/><rect x="2.500" y="9.500" width="4.800" height="5.500" fill="#f2f2f2"/><rect x="8.700" y="2.500" width="5" height="4.500" fill="#f2f2f2"/><rect x="8.700" y="9.500" width="5" height="4.500" fill="#f2f2f2"/><path d="M0 8.200h16" stroke="#25813a" stroke-width="1.200"/></svg>
<svg style="left:808.0px;top:234.5px;" width="10" height="10" viewBox="0 0 16 16"><rect x="2.500" y="1.500" width="4.800" height="10.500" fill="#f2f2f2"/><rect x="8.700" y="3.500" width="5" height="8.500" fill="#f2f2f2"/><path d="M0 13.800h16" stroke="#25813a" stroke-width="1.500"/></svg>
<svg style="left:825.0px;top:234.5px;" width="10" height="10" viewBox="0 0 16 16"><rect x="2.500" y="4.500" width="4.800" height="10" fill="#f2f2f2"/><rect x="8.700" y="4.500" width="5" height="8.500" fill="#f2f2f2"/><path d="M0 2.200h16" stroke="#25813a" stroke-width="1.500"/></svg>
<span class="t" style="left:841px;top:232.500px;font-size:9px;color:#c8c8c8;">y<span style="font-size:6px;vertical-align:2px">a</span></span><div class="abs" style="left:838px;top:243px;width:4px;height:1px;background:#2ea043"></div>
<svg style="left:754.0px;top:279.0px;" width="10" height="10" viewBox="0 0 16 16"><path d="M4 0v16" stroke="#b0b0b0" stroke-width="1.200"/><rect x="3" y="4" width="5.500" height="11" fill="#f2f2f2"/><rect x="10" y="6.500" width="4.500" height="6" fill="#f2f2f2"/><path d="M11.500 1v5" stroke="#b0b0b0" stroke-width="1"/></svg>
<svg style="left:772.0px;top:279.0px;" width="10" height="10" viewBox="0 0 16 16"><path d="M5.500 0v16M11.500 2v5" stroke="#b0b0b0" stroke-width="1.200"/><rect x="2.500" y="4" width="5.500" height="11" fill="#f2f2f2"/><rect x="10" y="6.500" width="4.500" height="6" fill="#f2f2f2"/></svg>
<svg style="left:789.7px;top:279.0px;" width="10" height="10" viewBox="0 0 16 16"><path d="M12 0v16M6 2v5" stroke="#b0b0b0" stroke-width="1.200"/><rect x="2.500" y="6.500" width="4.500" height="6" fill="#f2f2f2"/><rect x="8.500" y="4" width="5.500" height="11" fill="#f2f2f2"/></svg>
<svg style="left:807.0px;top:279.0px;" width="10" height="10" viewBox="0 0 16 16"><rect x="1.500" y="6" width="3.500" height="7" fill="#f2f2f2"/><rect x="7" y="7" width="3" height="5" fill="#f2f2f2"/><rect x="11.500" y="5" width="3.500" height="9" fill="#f2f2f2"/><path d="M5 3.500h2M10 3.500h1.500" stroke="#2ea043" stroke-width="1.200"/></svg>
<span class="t" style="left:825px;top:279.800px;font-size:9px;color:#d8d8d8;">ay</span><div class="abs" style="left:825px;top:279.500px;width:5px;height:1px;background:#2ea043"></div>
<svg style="left:754.0px;top:302.0px;" width="10" height="10" viewBox="0 0 16 16"><path d="M0 4h16" stroke="#b0b0b0" stroke-width="1.200"/><rect x="5" y="4" width="9" height="4" fill="#f2f2f2"/><rect x="7" y="10" width="5" height="4" fill="#f2f2f2"/></svg>
<svg style="left:772.0px;top:302.0px;" width="10" height="10" viewBox="0 0 16 16"><path d="M0 5.500h16" stroke="#b0b0b0" stroke-width="1.200"/><rect x="5" y="3" width="9" height="5" fill="#f2f2f2"/><rect x="7" y="10" width="5" height="4" fill="#f2f2f2"/></svg>
<svg style="left:789.7px;top:302.0px;" width="10" height="10" viewBox="0 0 16 16"><path d="M0 12h16" stroke="#b0b0b0" stroke-width="1.200"/><rect x="7" y="3" width="5" height="4" fill="#f2f2f2"/><rect x="5" y="9" width="9" height="4" fill="#f2f2f2"/></svg>
<svg style="left:807.0px;top:302.0px;" width="10" height="10" viewBox="0 0 16 16"><rect x="5" y="1.500" width="9" height="3.500" fill="#f2f2f2"/><rect x="6" y="6.800" width="7" height="3" fill="#f2f2f2"/><rect x="5" y="11.500" width="9" height="3.500" fill="#f2f2f2"/><path d="M2.500 5v2M2.500 10v1.500" stroke="#2ea043" stroke-width="1.200"/></svg>
<span class="t" style="left:830px;top:303px;font-size:7px;line-height:.8;color:#c8c8c8;">a<br>y</span><div class="abs" style="left:824.500px;top:303.500px;width:1px;height:8px;background:#2ea043"></div><div class="abs" style="left:824.500px;top:303.500px;width:4px;height:1px;background:#2ea043"></div>
<svg style="left:754.8px;top:346.0px;" width="10" height="10" viewBox="0 0 16 16"><path d="M4 3l8 2-3 8zM4 3l5 10" stroke="#c0c0c0" stroke-width="1.200" fill="none"/><circle cx="4" cy="3.500" r="2.300" fill="#f2f2f2"/><circle cx="12" cy="5.500" r="2.300" fill="#f2f2f2"/><circle cx="8.500" cy="13" r="2.300" fill="#f2f2f2"/></svg>
<svg style="left:772.8px;top:346.0px;" width="10" height="10" viewBox="0 0 16 16"><rect x="2" y="1.500" width="5" height="5" fill="#f2f2f2"/><rect x="9" y="9" width="5.500" height="5.500" fill="#f2f2f2"/><path d="M8 3h4.500v4" stroke="#c0c0c0" stroke-width="1.400" fill="none"/><rect x="2.500" y="9.500" width="4" height="5" fill="#3d8fe8" opacity=".8"/></svg>
<svg style="left:790.0px;top:346.0px;" width="10" height="10" viewBox="0 0 16 16"><rect x="2" y="1.500" width="5" height="5" fill="#f2f2f2"/><rect x="9" y="9" width="5.500" height="5.500" fill="#f2f2f2"/><path d="M8 3h4.500v4" stroke="#c0c0c0" stroke-width="1.400" fill="none"/><rect x="2.500" y="9.500" width="4" height="5" fill="#3d8fe8" opacity=".8"/></svg>
<svg style="left:807.0px;top:346.0px;" width="10" height="10" viewBox="0 0 16 16"><rect x="2" y="1.500" width="5" height="5" fill="#f2f2f2"/><rect x="9" y="9" width="5.500" height="5.500" fill="#f2f2f2"/><path d="M8 3h4.500v4" stroke="#c0c0c0" stroke-width="1.400" fill="none"/><rect x="2.500" y="9.500" width="4" height="5" fill="#8ab" opacity=".8"/></svg>
<svg style="left:824.0px;top:346.0px;" width="10" height="10" viewBox="0 0 16 16"><g fill="#f2f2f2"><circle cx="8" cy="3" r="2.300"/><circle cx="3" cy="8" r="2.300"/><circle cx="13" cy="8" r="2.300"/><circle cx="8" cy="13" r="2.300"/><rect x="5" y="5" width="6" height="6"/></g><rect x="6.500" y="6.500" width="3" height="3" fill="#2a2a2a"/></svg>
<svg style="left:842.0px;top:346.0px;" width="10" height="10" viewBox="0 0 16 16"><path d="M4 8l8-4.500M4 8l8 4.500" stroke="#c8c8c8" stroke-width="1.300"/><circle cx="3.500" cy="8" r="2.300" fill="#f2f2f2"/><circle cx="12.500" cy="3.500" r="2.300" fill="#f2f2f2"/><circle cx="12.500" cy="12.500" r="2.300" fill="#f2f2f2"/></svg>
<svg style="left:920.500px;top:393.500px" width="10" height="11" viewBox="0 0 10 11"><path d="M1.300 3v8M5 0v11M8.700 0v11" stroke="#f2f2f2" stroke-width="2.200"/><rect x="0.200" y="0" width="2.200" height="1.800" fill="#f2f2f2"/></svg>
<svg style="left:1257.5px;top:76.0px;" width="13" height="13" viewBox="0 0 16 16"><path d="M3.500 1.500h6l3 3v10h-9z" fill="none" stroke="#f2f2f2" stroke-width="1.900" stroke-linejoin="round"/><circle cx="13.500" cy="2" r="1.800" fill="#2ea043"/></svg>
<svg style="left:1257.5px;top:99.5px;" width="13" height="13" viewBox="0 0 16 16"><path d="M1.500 14V2.500h4.500l1.500 2h7v2.500" fill="none" stroke="#f2f2f2" stroke-width="1.700" stroke-linejoin="round"/><path d="M1.500 14l2-6.500h11.500l-2 6.500z" fill="#f2f2f2"/></svg>
<svg style="left:1257.5px;top:124.0px;" width="13" height="13" viewBox="0 0 16 16"><path d="M1.500 9.500h13v5h-13z" fill="#f2f2f2"/><path d="M3 9l1.500-3h7l1.500 3" fill="none" stroke="#f2f2f2" stroke-width="1.300"/><path d="M8 0v5M5.500 3.500L8 6.500l2.500-3z" stroke="#2ea043" stroke-width="1.600" fill="#2ea043"/><path d="M4 12.500h8" stroke="#363636" stroke-width="1.200"/></svg>
<svg style="left:1257.5px;top:148.5px;" width="13" height="13" viewBox="0 0 16 16"><rect x="4" y="1.500" width="8" height="4" fill="#f2f2f2"/><rect x="1" y="5.500" width="14" height="6" rx="1" fill="#f2f2f2"/><rect x="4" y="10" width="8" height="4.500" fill="#f2f2f2" stroke="#363636" stroke-width="1"/></svg>
<svg style="left:1257.5px;top:176.0px;" width="13" height="13" viewBox="0 0 16 16"><path d="M3.500 1.500h6l3 3v10h-9z" fill="none" stroke="#f2f2f2" stroke-width="1.900" stroke-linejoin="round"/><path d="M0 9h7M4.500 6l3 3-3 3" stroke="#2ea043" stroke-width="1.800" fill="none"/></svg>
<svg style="left:1256.5px;top:201.0px;" width="13" height="13" viewBox="0 0 16 16"><path d="M3.500 1.500h6l3 3v10h-9z" fill="none" stroke="#f2f2f2" stroke-width="1.900" stroke-linejoin="round"/><path d="M8 9h7M12.500 6l3 3-3 3" stroke="#2ea043" stroke-width="1.800" fill="none"/></svg>
<svg style="left:1258.0px;top:228.0px;" width="12" height="12" viewBox="0 0 16 16"><path d="M3 5.500h7a3.500 3.500 0 0 1 0 7H6" fill="none" stroke="#f2f2f2" stroke-width="1.900"/><path d="M6 2L2 5.500 6 9z" fill="#f2f2f2"/></svg>
<svg style="left:1258.0px;top:253.7px;" width="12" height="12" viewBox="0 0 16 16"><path d="M13 5.500H6a3.500 3.500 0 0 0 0 7h4" fill="none" stroke="#6e6e6e" stroke-width="1.900"/><path d="M10 2l4 3.500L10 9z" fill="#6e6e6e"/></svg>
<svg style="left:1257.5px;top:280.2px;" width="13" height="13" viewBox="0 0 16 16"><rect x="1.500" y="1.500" width="8.500" height="9" fill="#f2f2f2"/><rect x="6" y="5.500" width="8.500" height="9" fill="#f2f2f2" stroke="#363636" stroke-width="1.200"/></svg>
<svg style="left:1257.5px;top:305.0px;" width="13" height="13" viewBox="0 0 16 16"><path d="M4 1.500l6.500 9M12 1.500L5.500 10.500" stroke="#f2f2f2" stroke-width="1.700"/><circle cx="4" cy="12.500" r="2.200" fill="none" stroke="#f2f2f2" stroke-width="1.500"/><circle cx="12" cy="12.500" r="2.200" fill="none" stroke="#f2f2f2" stroke-width="1.500"/></svg>
<svg style="left:1257.5px;top:330.2px;" width="13" height="13" viewBox="0 0 16 16"><rect x="2" y="2.500" width="12" height="12.500" rx="1" fill="#f2f2f2"/><rect x="5" y="1" width="6" height="3" fill="#f2f2f2" stroke="#363636" stroke-width=".8"/><rect x="6" y="7" width="6" height="6" fill="#888"/></svg>
<svg style="left:1257.5px;top:356.5px;" width="13" height="13" viewBox="0 0 16 16"><circle cx="7" cy="7" r="5" fill="none" stroke="#f2f2f2" stroke-width="2"/><path d="M10.800 10.800l3.700 3.700" stroke="#f2f2f2" stroke-width="2.300" stroke-linecap="round"/><rect x="4.500" y="4.500" width="5" height="5" fill="#f2f2f2"/></svg>
<svg style="left:1257.5px;top:381.5px;" width="13" height="13" viewBox="0 0 16 16"><circle cx="7" cy="7" r="5" fill="none" stroke="#f2f2f2" stroke-width="2"/><path d="M10.800 10.800l3.700 3.700" stroke="#f2f2f2" stroke-width="2.300" stroke-linecap="round"/><circle cx="7" cy="7" r="2.600" fill="#f2f2f2"/></svg>
<svg style="left:1257.5px;top:406.0px;" width="13" height="13" viewBox="0 0 16 16"><circle cx="7" cy="7" r="5" fill="none" stroke="#f2f2f2" stroke-width="2"/><path d="M10.800 10.800l3.700 3.700" stroke="#f2f2f2" stroke-width="2.300" stroke-linecap="round"/><rect x="5" y="4" width="4" height="6" fill="#f2f2f2"/></svg>
<svg style="left:1257.5px;top:430.5px;" width="13" height="13" viewBox="0 0 16 16"><path d="M3 1v14M13 1v14M1 3h14M1 13h14" stroke="#f2f2f2" stroke-width="1.200"/><rect x="6" y="6" width="4" height="4" fill="#f2f2f2"/></svg>
<svg style="left:1257.5px;top:458.5px;" width="13" height="13" viewBox="0 0 16 16"><path d="M1.500 1.500h8v8h-8z" fill="none" stroke="#f2f2f2" stroke-width="1.700"/><rect x="5.500" y="5.500" width="9.500" height="9.500" fill="#27c131"/></svg>
<svg style="left:1257.5px;top:483.0px;" width="13" height="13" viewBox="0 0 16 16"><path d="M1.500 1.500h8v8h-8z" fill="#f2f2f2"/><rect x="6" y="6" width="8.500" height="8.500" fill="#363636" stroke="#f2f2f2" stroke-width="1.700"/><rect x="8.500" y="8.500" width="3" height="3" fill="#f2f2f2"/></svg>
<svg style="left:1257.5px;top:508.5px;" width="13" height="13" viewBox="0 0 16 16"><path d="M1.500 1.500h8v8h-8z" fill="#f2f2f2"/><rect x="6" y="6" width="8.500" height="8.500" fill="#363636" stroke="#f2f2f2" stroke-width="1.700"/><path d="M8 10.500h4.500" stroke="#f2f2f2" stroke-width="1.500"/></svg>
<svg style="left:1257.0px;top:535.0px;" width="14" height="14" viewBox="0 0 16 16"><circle cx="6.500" cy="6.500" r="3.500" fill="#f2f2f2"/><circle cx="9.500" cy="9.500" r="3.500" fill="#b8b8b8" stroke="#363636" stroke-width=".8"/><path d="M1 4V1h3M12 1h3v3M15 12v3h-3M4 15H1v-3" stroke="#2ea043" stroke-width="1.300" fill="none"/></svg>
<svg style="left:1258.0px;top:559.5px;" width="12" height="12" viewBox="0 0 16 16"><circle cx="8" cy="8" r="3.500" fill="#f2f2f2"/><path d="M8 1v3M8 12v3M1 8h3M12 8h3M3 3l2 2M11 11l2 2M13 3l-2 2M5 11l-2 2" stroke="#f2f2f2" stroke-width="1.600"/></svg>
<svg style="left:1252px;top:614.500px" width="12" height="10" viewBox="-6 -5 12 10"><path d="M-3.300 1.800L0 -1.800L3.300 1.800" fill="none" stroke="#6a6a6a" stroke-width="1.300"/></svg>
<svg style="left:1252px;top:635px" width="12" height="10" viewBox="-6 -5 12 10"><path d="M-3.3 -1.800L0 1.800L3.3 -1.800" fill="none" stroke="#6a6a6a" stroke-width="1.3"/></svg>
<svg style="left:1267.500px;top:637.500px" width="10" height="9" viewBox="0 0 10 9"><path d="M0 1h10M0 4.500h10M0 8h10" stroke="#f2f2f2" stroke-width="1.500"/></svg>
<svg style="left:241.5px;top:660.5px;" width="11" height="11" viewBox="0 0 16 16"><path d="M1 9c2.500-4 11.500-4 14 0-2.500 4-11.500 4-14 0z" fill="#f2f2f2"/><circle cx="8" cy="9" r="2.300" fill="#343434"/><path d="M3.500 3.500l1.500 2M8 2.500v2.500M12.500 3.500L11 5.500" stroke="#f2f2f2" stroke-width="1.300"/></svg>
<svg style="left:265.0px;top:660.5px;" width="11" height="11" viewBox="0 0 16 16"><rect x="2" y="7.500" width="9.500" height="7" rx="1" fill="#f2f2f2"/><path d="M9 7.500V5a2.800 2.800 0 0 1 5.600 0v1.500" fill="none" stroke="#f2f2f2" stroke-width="1.700"/></svg>
<svg style="left:22.8px;top:70.0px;" width="11" height="11" viewBox="0 0 16 16"><rect x="1.500" y="7.500" width="9.500" height="7" rx=".8" fill="#f2f2f2"/><path d="M8.500 7.500V5a2.800 2.800 0 0 1 5.600 0v1.500" fill="none" stroke="#f2f2f2" stroke-width="1.700"/></svg>
<svg style="left:723.5px;top:69.5px;" width="11" height="11" viewBox="0 0 16 16"><rect x="1.500" y="2" width="13" height="9.500" rx="1.500" fill="none" stroke="#d8d8d8" stroke-width="1.600"/><path d="M5 14h6" stroke="#d8d8d8" stroke-width="1.600"/></svg>
<svg style="left:739px;top:332px" width="3" height="11" viewBox="0 0 3 11"><circle cx="1.500" cy="1.500" r="1" fill="#d0d0d0"/><circle cx="1.500" cy="5.500" r="1" fill="#d0d0d0"/><circle cx="1.500" cy="9.500" r="1" fill="#d0d0d0"/></svg>
<svg style="left:555px;top:70px" width="56" height="12" viewBox="555 70 56 12"><path d="M557.300 73.500 Q558 78.400 562 78.400 L603 78.400 Q607 78.400 607.700 73.500" fill="#1a2238" fill-opacity=".5" stroke="#3a66c4" stroke-width="1.100"/></svg>
<svg style="left:22px;top:234px" width="12" height="66" viewBox="22 234 12 66"><path d="M25.500 236.300 Q30.400 237 30.400 241 L30.400 292 Q30.400 296 25.500 296.700" fill="#1a2238" fill-opacity=".5" stroke="#3a66c4" stroke-width="1.100"/></svg>
<svg style="left:589.800px;top:79.800px" width="5" height="3.200" viewBox="0 0 5 3.200"><path d="M0 0h5L2.500 3.200z" fill="#f0f0f0"/></svg>
<svg style="left:31.800px;top:276.200px" width="3.200" height="5" viewBox="0 0 3.200 5"><path d="M0 0v5L3.200 2.500z" fill="#f0f0f0"/></svg>
<span class="t" style="left:19.5px;top:5.15px;font-size:9.5px;transform:scaleX(0.9384);color:#f0f0f0;">*ゆきだるま.svg - Inkscape</span>
<span class="t" style="left:5px;top:25.80px;font-size:10px;transform:scaleX(0.7389);">ファイル(F)</span>
<span class="t" style="left:56px;top:25.80px;font-size:10px;transform:scaleX(0.9297);">編集(E)</span>
<span class="t" style="left:98.5px;top:25.80px;font-size:10px;transform:scaleX(0.9447);">表示(V)</span>
<span class="t" style="left:141.5px;top:25.80px;font-size:10px;transform:scaleX(0.7608);">レイヤー(L)</span>
<span class="t" style="left:192.5px;top:25.80px;font-size:10px;transform:scaleX(0.7454);">オブジェクト(O)</span>
<span class="t" style="left:260px;top:25.80px;font-size:10px;transform:scaleX(0.7798);">パス(P)</span>
<span class="t" style="left:297.5px;top:25.80px;font-size:10px;transform:scaleX(0.7719);">テキスト(T)</span>
<span class="t" style="left:348.5px;top:25.80px;font-size:10px;transform:scaleX(0.7365);">フィルター(S)</span>
<span class="t" style="left:406px;top:25.80px;font-size:10px;transform:scaleX(0.7639);">エクステンション(N)</span>
<span class="t" style="left:489px;top:25.80px;font-size:10px;transform:scaleX(0.8430);">ヘルプ(H)</span>
<span class="t" style="left:342.5px;top:48.80px;font-size:10px;transform:scaleX(0.7934);">X:</span>
<span class="t" style="left:358px;top:48.35px;font-size:10.5px;transform:scaleX(0.8823);">183.669</span>
<span class="t" style="left:437.5px;top:48.80px;font-size:10px;transform:scaleX(0.8421);">Y:</span>
<span class="t" style="left:451px;top:48.35px;font-size:10.5px;transform:scaleX(0.8823);">124.514</span>
<span class="t" style="left:549.5px;top:48.35px;font-size:10.5px;transform:scaleX(0.8872);">20.448</span>
<span class="t" style="left:657px;top:48.80px;font-size:10px;transform:scaleX(0.9000);">H:</span>
<span class="t" style="left:672.5px;top:48.35px;font-size:10.5px;transform:scaleX(0.8872);">25.920</span>
<span class="t" style="left:760.5px;top:48.30px;font-size:11px;transform:scaleX(0.9275);">mm</span>
<span class="t" style="left:768.5px;top:102.30px;font-size:10px;transform:scaleX(0.9750);">整列</span>
<span class="t" style="left:817px;top:102.30px;font-size:10px;transform:scaleX(0.7000);">グリッド</span>
<span class="t" style="left:874px;top:102.30px;font-size:10px;transform:scaleX(0.9000);">円</span>
<span class="t" style="left:751.7px;top:125.30px;font-size:10px;transform:scaleX(0.9650);font-weight:bold;">整列</span>
<span class="t" style="left:771.8px;top:144.70px;font-size:10px;transform:scaleX(0.8191);">3 回目のクリックでハンドルを整列</span>
<span class="t" style="left:771.8px;top:167.70px;font-size:10px;transform:scaleX(0.8034);">選択オブジェクトをグループとして移動/整列</span>
<span class="t" style="left:751.7px;top:190.60px;font-size:10px;transform:scaleX(0.9174);">基準:</span>
<span class="t" style="left:781px;top:190.60px;font-size:10px;transform:scaleX(0.7883);">ページ</span>
<span class="t" style="left:751.7px;top:261.30px;font-size:10px;transform:scaleX(0.9650);font-weight:bold;">配置</span>
<span class="t" style="left:751.7px;top:329.00px;font-size:10px;transform:scaleX(0.9767);font-weight:bold;">再配置</span>
<span class="t" style="left:751.7px;top:374.00px;font-size:10px;transform:scaleX(0.8800);font-weight:bold;">重なりを除去</span>
<span class="t" style="left:754.6px;top:394.30px;font-size:10px;transform:scaleX(0.8400);">H:</span>
<span class="t" style="left:771.8px;top:394.30px;font-size:10px;transform:scaleX(0.9348);">0</span>
<span class="t" style="left:836px;top:394.30px;font-size:10px;transform:scaleX(0.9914);">V:</span>
<span class="t" style="left:852.6px;top:394.30px;font-size:10px;transform:scaleX(0.9708);">0</span>
<span class="t" style="left:14.7px;top:656.30px;font-size:10px;transform:scaleX(0.6995);">フィル:</span>
<span class="t" style="left:0px;top:670.30px;font-size:10px;transform:scaleX(0.7105);">ストローク:</span>
<span class="t" style="left:51.5px;top:670.30px;font-size:10px;transform:scaleX(0.7559);">アンセット</span>
<span class="t" style="left:94.7px;top:669.30px;font-size:10px;transform:scaleX(0.9308);">0.265</span>
<span class="t" style="left:122px;top:661.30px;font-size:10px;transform:scaleX(0.8521);">O:</span>
<span class="t" style="left:140.6px;top:661.30px;font-size:10px;transform:scaleX(0.9228);">100</span>
<span class="t" style="left:197px;top:661.30px;font-size:10px;transform:scaleX(0.8993);">Layer 1</span>
<span class="t" style="left:288px;top:662.30px;font-size:10px;transform:scaleX(0.9597);"><b>移動</b> 22.39 mm, -5.67 mm</span>
<span class="t" style="left:399.3px;top:662.30px;font-size:10px;">。</span>
<span class="t" style="left:407.8px;top:662.30px;font-size:10px;transform:scaleX(0.9089);"><b>Ctrl</b> で水平/垂直方向に制限、</span>
<span class="t" style="left:532.8px;top:662.30px;font-size:10px;transform:scaleX(0.8186);"><b>Shift</b> でスナップを無効化します</span>
<span class="t" style="left:1064px;top:655.30px;font-size:10px;transform:scaleX(0.8463);">X:</span>
<span class="t" style="left:1082.5px;top:655.30px;font-size:10px;transform:scaleX(0.9185);">197.82</span>
<span class="t" style="left:1064px;top:669.30px;font-size:10px;transform:scaleX(0.8982);">Y:</span>
<span class="t" style="left:1082.5px;top:669.30px;font-size:10px;transform:scaleX(0.9185);">143.12</span>
<span class="t" style="left:1119px;top:661.30px;font-size:10px;transform:scaleX(0.8998);">Z:</span>
<span class="t" style="left:1140px;top:661.30px;font-size:10px;transform:scaleX(0.9393);">93%</span>
<span class="t" style="left:1197px;top:661.30px;font-size:10px;transform:scaleX(0.8000);">R:</span>
<span class="t" style="left:1220.6px;top:661.30px;font-size:10px;transform:scaleX(0.9332);">0.00°</span>
<!-- caption -->
<svg id="cap" style="left:320px;top:470px;filter:drop-shadow(1px 1.500px 1.500px rgba(0,0,0,.5));" width="370" height="56" viewBox="320 470 370 56">
<g font-family="Noto Sans CJK JP, sans-serif" font-weight="900" font-size="30.500" letter-spacing="0.700" transform="translate(332.500 0) scale(1.075 1) translate(-332.500 0)">
<text x="332.500" y="509.500" fill="#000" stroke="#000" stroke-width="7.600" stroke-linejoin="round">ドラッグして移動する</text>
<text x="332.500" y="509.500" fill="#ffe183">ドラッグして移動する</text>
</g>
</svg>
<!-- logo -->
<div class="abs" id="logo" style="left:0;top:0;color:#fff;">
<span class="t" style="left:980.500px;top:423.500px;font-size:18px;font-weight:300;transform:rotate(-15deg) scaleX(1.050);transform-origin:0 100%;letter-spacing:0.500px;color:#fff;">初期費用</span>
<svg style="left:970px;top:400px" width="110" height="60" viewBox="970 400 110 60"><path d="M977.500 442 C984 446 992 446.500 1001 442 C1009 438 1012 434.500 1016.500 436 C1020.500 437.500 1019 441.500 1016.500 440.500 C1014 439.500 1016 436.500 1022 435.500 C1036 433.500 1049 431.500 1058.500 425 C1064 421 1066.500 416 1068 410.500" fill="none" stroke="#fff" stroke-width="0.900" stroke-linecap="round"/></svg>
<span class="t lg" id="lg1" style="left:1017px;top:441.300px;font-size:25px;font-weight:700;transform:scaleX(1.210);">ゼロ</span>
<span class="t lg" id="lg2" style="left:1080.300px;top:450.500px;font-size:16px;font-weight:500;letter-spacing:.5px;transform:scaleX(1.150);">から</span>
<span class="t lg" id="lg3" style="left:1030.200px;top:470.700px;font-size:17px;font-weight:400;letter-spacing:1.300px;transform:scaleX(1.080);">はじめて</span>
<span class="t lg" id="lg4" style="left:1107px;top:470.500px;font-size:19px;font-weight:700;transform:scaleX(1.035);">クリエイター</span>
<span class="t lg" id="lg5" style="left:1043.800px;top:498px;font-size:11px;font-weight:400;letter-spacing:.15px">zero kara hajimete creator</span>
</div>

</body>
</html>
